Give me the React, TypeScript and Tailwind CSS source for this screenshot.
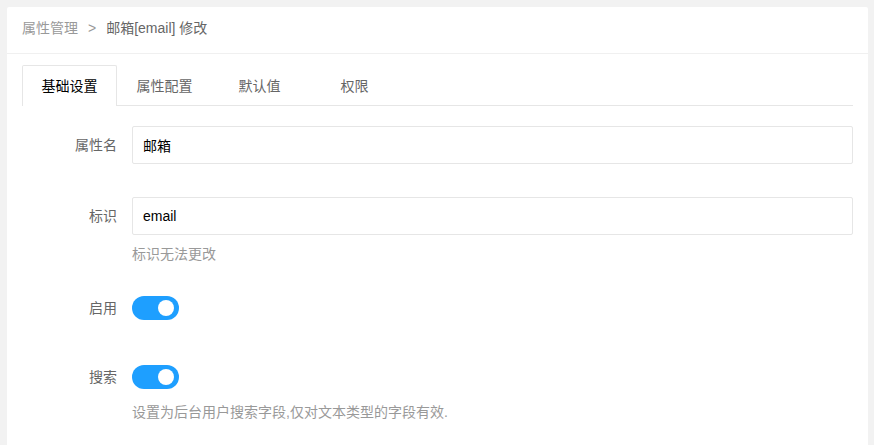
import React, { useState } from "react";

const font = { fontFamily: '"Liberation Sans", "Noto Sans CJK SC", sans-serif' };

function Toggle({ on, onChange }: { on: boolean; onChange: (v: boolean) => void }) {
  return (
    <button
      type="button"
      onClick={() => onChange(!on)}
      className={`relative h-[24px] w-[47px] rounded-full ${on ? "bg-[#1e9fff]" : "bg-[#d2d2d2]"}`}
    >
      <span
        className={`absolute top-[4px] h-[16px] w-[16px] rounded-full bg-white ${on ? "left-[26px]" : "left-[5px]"}`}
      />
    </button>
  );
}

export default function App() {
  const [tab, setTab] = useState(0);
  const [name, setName] = useState("邮箱");
  const [enabled, setEnabled] = useState(true);
  const [search, setSearch] = useState(true);
  const tabs = ["基础设置", "属性配置", "默认值", "权限"];

  return (
    <div className="min-h-[445px] bg-[#f2f2f2] pl-[7px] pr-[6px] pt-[7px]" style={font}>
      <div className="min-h-[438px] rounded-t-[2px] bg-white">
        <div className="flex h-[47px] items-start border-b border-[#f0f0f0] pl-[15px] pt-[11px] text-[14px] leading-[20px]">
          <span className="text-[#999]">属性管理</span>
          <span className="mx-[10px] text-[#999]">&gt;</span>
          <span className="text-[#666]">邮箱[email] 修改</span>
        </div>

        <div className="px-[15px] pt-[11px]">
          <div className="flex h-[41px] border-b border-[#e6e6e6]">
            {tabs.map((t, i) => (
              <button
                key={t}
                type="button"
                onClick={() => setTab(i)}
                className={`-mb-[1px] h-[41px] w-[95px] text-center text-[14px] leading-[40px] ${
                  tab === i
                    ? "w-[94px] rounded-t-[2px] border border-b-0 border-[#e6e6e6] bg-white text-[#000]"
                    : "text-[#666]"
                }`}
              >
                {t}
              </button>
            ))}
          </div>

          <div className="text-[14px]">
            <div className="mt-[20px] flex items-start">
              <label className="h-[38px] w-[110px] shrink-0 pr-[15px] text-right leading-[38px] text-[#666]">属性名</label>
              <input
                value={name}
                onChange={(e) => setName(e.target.value)}
                className="h-[38px] flex-1 rounded-[2px] border border-[#e6e6e6] px-[10px] text-[#000] outline-none"
              />
            </div>

            <div className="mt-[33px] flex items-start">
              <label className="h-[38px] w-[110px] shrink-0 pr-[15px] text-right leading-[38px] text-[#666]">标识</label>
              <div className="flex-1">
                <input
                  value="email"
                  readOnly
                  className="h-[38px] w-full rounded-[2px] border border-[#e6e6e6] px-[10px] text-[#000] outline-none"
                />
                <div className="mt-[9px] leading-[20px] text-[#999]">标识无法更改</div>
              </div>
            </div>

            <div className="mt-[32px] flex items-start">
              <label className="h-[24px] w-[110px] shrink-0 pr-[15px] text-right leading-[24px] text-[#666]">启用</label>
              <Toggle on={enabled} onChange={setEnabled} />
            </div>

            <div className="mt-[45px] flex items-start">
              <label className="h-[24px] w-[110px] shrink-0 pr-[15px] text-right leading-[24px] text-[#666]">搜索</label>
              <div className="flex-1">
                <Toggle on={search} onChange={setSearch} />
                <div className="mt-[7px] leading-[20px] text-[#999]">设置为后台用户搜索字段,仅对文本类型的字段有效.</div>
              </div>
            </div>
          </div>
        </div>
      </div>
    </div>
  );
}
